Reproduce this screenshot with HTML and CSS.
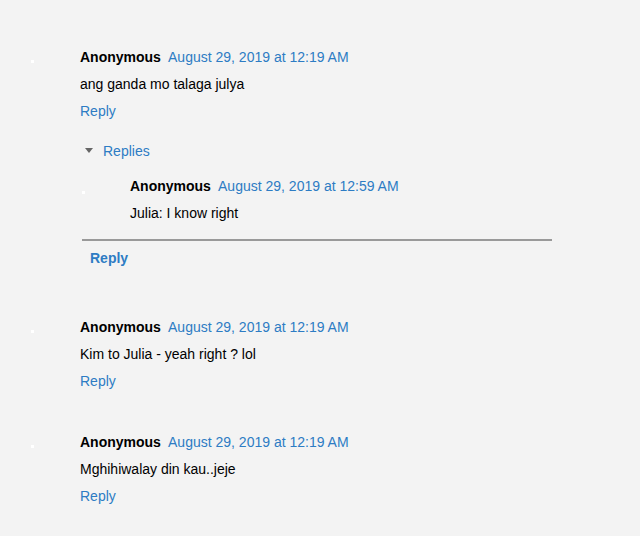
FILE: index.html
```html
<!DOCTYPE html>
<html>
<head>
<meta charset="utf-8">
<link rel="stylesheet" href="styles.css">
</head>
<body>
<div class="thread">
  <div class="comment first">
    <div class="avatar"><span class="dot"></span></div>
    <div class="content">
      <div class="row head"><span class="user">Anonymous</span> <a class="date">August 29, 2019 at 12:19 AM</a></div>
      <div class="row body">ang ganda mo talaga julya</div>
      <div class="row"><a class="reply">Reply</a></div>
      <div class="replies">
        <div class="toggle"><span class="tri"></span><a>Replies</a></div>
        <div class="comment nested">
          <div class="avatar"><span class="dot"></span></div>
          <div class="content">
            <div class="row head"><span class="user">Anonymous</span> <a class="date">August 29, 2019 at 12:59 AM</a></div>
            <div class="row body">Julia: I know right</div>
          </div>
        </div>
        <div class="continue"><a>Reply</a></div>
      </div>
    </div>
  </div>
  <div class="comment second">
    <div class="avatar"><span class="dot"></span></div>
    <div class="content">
      <div class="row head"><span class="user">Anonymous</span> <a class="date">August 29, 2019 at 12:19 AM</a></div>
      <div class="row body">Kim to Julia - yeah right ? lol</div>
      <div class="row"><a class="reply">Reply</a></div>
    </div>
  </div>
  <div class="comment third">
    <div class="avatar"><span class="dot"></span></div>
    <div class="content">
      <div class="row head"><span class="user">Anonymous</span> <a class="date">August 29, 2019 at 12:19 AM</a></div>
      <div class="row body">Mghihiwalay din kau..jeje</div>
      <div class="row"><a class="reply">Reply</a></div>
    </div>
  </div>
</div>
</body>
</html>
```
FILE: styles.css
```css
html, body {
  margin: 0;
  padding: 0;
  background: #f3f3f3;
}
body {
  font-family: "Liberation Sans", Arial, sans-serif;
  font-size: 14px;
  color: #000;
  width: 640px;
  height: 536px;
  overflow: hidden;
}
a {
  color: #2d7cc4;
  text-decoration: none;
}
.thread {
  padding-top: 44px;
}
.comment {
  display: flex;
}
.comment.second {
  margin-top: 42px;
}
.comment.third {
  margin-top: 34px;
}
.avatar {
  width: 80px;
  flex: none;
}
.dot {
  display: block;
  width: 3px;
  height: 3px;
  background: #fff;
  margin: 16px 0 0 31px;
}
.content {
  flex: 1;
}
.row {
  line-height: 27px;
  height: 27px;
}
.user {
  font-weight: bold;
  margin-right: 4px;
}
.replies {
  margin-top: 13px;
  width: 470px;
  margin-left: 2px;
}
.toggle {
  line-height: 27px;
  height: 27px;
  display: flex;
  align-items: center;
}
.tri {
  width: 0;
  height: 0;
  border-left: 4px solid transparent;
  border-right: 4px solid transparent;
  border-top: 5px solid #666;
  margin: 0 10px 2px 3px;
}
.comment.nested {
  margin-top: 8px;
}
.nested .avatar {
  width: 48px;
}
.nested .dot {
  margin: 18px 0 0 0;
}
.continue {
  margin-top: 12px;
  border-top: 2px solid #999;
  padding-top: 4px;
  line-height: 27px;
  height: 27px;
}
.continue a {
  font-weight: bold;
  margin-left: 8px;
}
```
